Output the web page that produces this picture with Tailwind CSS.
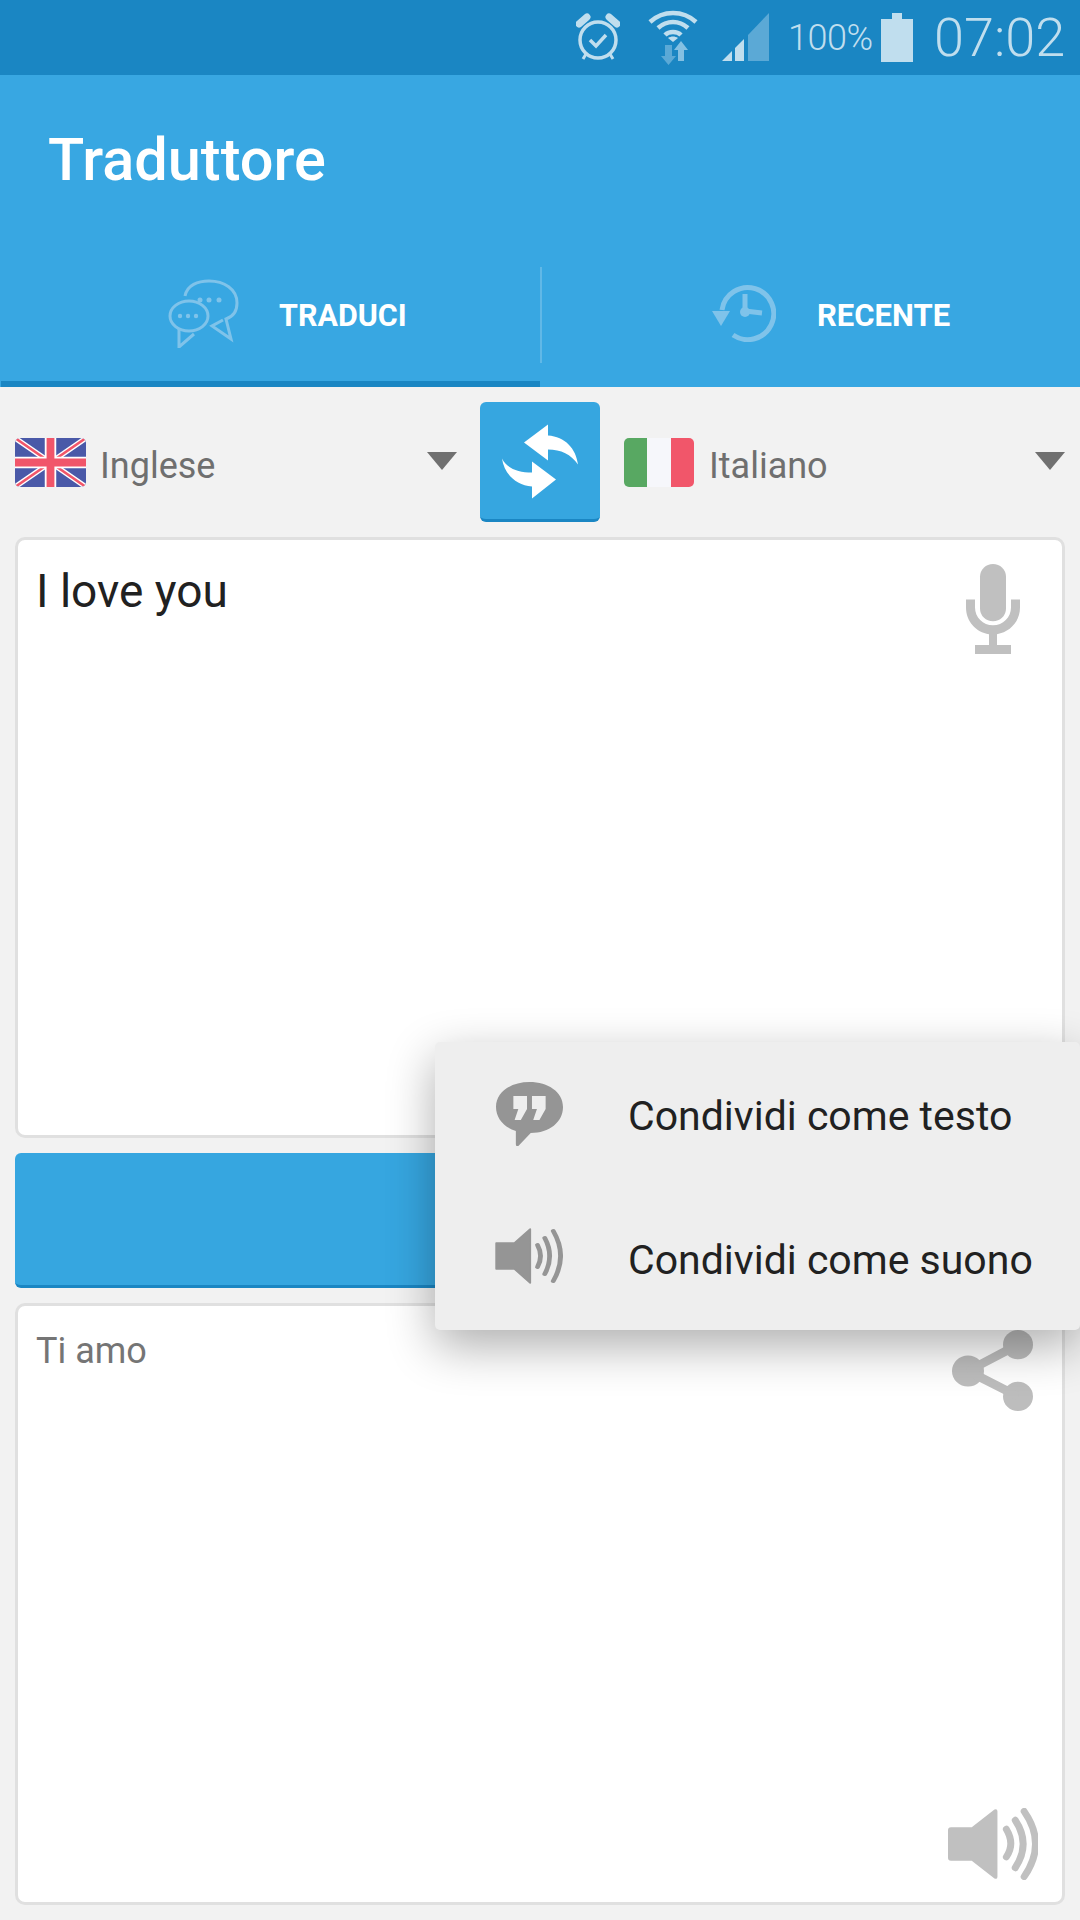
<!DOCTYPE html>
<html lang="it">
<head>
  <meta charset="UTF-8" />
  <meta name="viewport" content="width=device-width,initial-scale=1.0" />
  <title>Traduttore</title>
  <script src="https://cdn.jsdelivr.net/npm/@tailwindcss/browser@4"></script>
</head>

<body class="relative w-[1080px] h-[1920px] overflow-hidden bg-[#f2f2f2] font-['Roboto',sans-serif]">

  <!-- status bar -->
  <div class="h-[75px] bg-[#1a86c3] flex items-center text-[#c0deee]">
    <svg class="ml-[576px] w-[44px] h-[50px]" viewBox="0 0 44 50" fill="none" stroke="#c0deee">
      <circle cx="22" cy="27" r="18" stroke-width="3.5"/>
      <path d="M14 27l6 6 10-11" stroke-width="3.5"/>
      <path d="M3 11l8-7M41 11l-8-7" stroke-width="7" stroke-linecap="round"/>
      <path d="M10 41l-3 5M34 41l3 5" stroke-width="3"/>
    </svg>
    <svg class="ml-[28px] w-[50px] h-[56px]" viewBox="0 0 50 56" fill="none" stroke="#c0deee">
      <path d="M2 12C15 0 35 0 48 12" stroke-width="4.5"/>
      <path d="M10 18C19 10 31 10 40 18" stroke-width="4.5"/>
      <path d="M17 25C21 21 29 21 33 25" stroke-width="4.5"/>
      <path d="M25 32l-5-4c3-2 7-2 10 0z" fill="#c0deee" stroke="none"/>
      <path d="M17 35h7v11h4l-7.5 9-7.5-9h4z" fill="#5ba9d6" stroke="none"/>
      <path d="M33 31l7 9h-4v11h-6v-11h-4z" fill="#84c0e2" stroke="none"/>
    </svg>
    <svg class="ml-[24px] w-[47px] h-[49px]" viewBox="0 0 47 49">
      <path d="M0 48L10 38V48z" fill="#c0deee"/>
      <path d="M13 35L22 26V48H13z" fill="#c0deee"/>
      <path d="M26 22L47 0V48H26z" fill="#5ba9d6"/>
    </svg>
    <span class="ml-[19px] text-[36px] font-light w-[84px] tracking-[-0.5px]">100%</span>
    <svg class="ml-[9px] w-[32px] h-[49px]" viewBox="0 0 32 49">
      <path d="M11 0h10v6h11v43H0V6h11z" fill="#c0deee"/>
    </svg>
    <span class="ml-[21px] text-[54px] font-light leading-none">07:02</span>
  </div>

  <!-- app bar -->
  <div class="h-[191px] bg-[#38a7e2] flex items-center pl-[48px] pb-[20px]">
    <h1 class="text-[59.5px] font-medium text-white">Traduttore</h1>
  </div>

  <!-- tabs -->
  <div class="h-[121px] bg-[#38a7e2] flex">
    <div class="w-[539px] ml-[1px] h-full border-b-[6px] border-[#1a86c3] flex items-start pt-[10px] pl-[167px]">
      <svg class="w-[72px] h-[72px]" viewBox="0 0 72 72" fill="none" stroke="#7fc3ea" stroke-width="3">
        <path d="M17 20C19 9 30 5 41 5C56 5 69 13 69 27C69 36 64 41 58 43L63 63L44 50L55 44"/>
        <ellipse cx="21" cy="40" rx="19" ry="15"/>
        <path d="M11 53V71L26 58"/>
        <g fill="#7fc3ea" stroke="none">
          <circle cx="32" cy="24" r="2.5"/><circle cx="41" cy="24" r="2.5"/><circle cx="51" cy="24" r="2.5"/>
          <circle cx="12" cy="40" r="2.2"/><circle cx="20" cy="40" r="2.2"/><circle cx="28" cy="40" r="2.2"/>
        </g>
      </svg>
      <span class="ml-[39px] mt-[20px] text-[30.5px] font-bold text-white leading-[40px]">TRADUCI</span>
    </div>
    <div class="w-[2px] h-[96px] mt-[1px] bg-[#60b8e7]"></div>
    <div class="flex-1 flex items-start pt-[18px] pl-[170px]">
      <svg class="w-[64px] h-[58px]" viewBox="0 0 64 58" fill="none" stroke="#7fc3ea" stroke-width="5">
        <path d="M10 26A26 26 0 1 1 21 51"/>
        <path d="M0 27H18L9 42z" fill="#7fc3ea" stroke="none"/>
        <path d="M33 10V27L50 29"/>
        <circle cx="33" cy="28" r="5" fill="#7fc3ea" stroke="none"/>
      </svg>
      <span class="ml-[41px] mt-[12px] text-[31px] font-bold text-white leading-[40px]">RECENTE</span>
    </div>
  </div>

  <!-- language row -->
  <div class="h-[150px] flex items-start">
    <div class="w-[480px] h-full flex items-start pl-[15px] pt-[51px]">
      <svg class="w-[71px] h-[49px] rounded-[5px]" viewBox="0 0 68 47" preserveAspectRatio="none">
        <rect width="68" height="47" fill="#4a59a8"/>
        <path d="M0 0L68 47M68 0L0 47" stroke="#fff" stroke-width="5"/>
        <path d="M0 0L68 47M68 0L0 47" stroke="#f1566a" stroke-width="2.5"/>
        <path d="M34 0V47M0 23.5H68" stroke="#fff" stroke-width="11"/>
        <path d="M34 0V47M0 23.5H68" stroke="#f1566a" stroke-width="7.5"/>
      </svg>
      <span class="ml-[14px] mt-[4px] text-[36px] text-[#6f6f6f] leading-[48px] flex-1">Inglese</span>
      <div class="mt-[14px] mr-[23px] w-0 h-0 border-x-[15px] border-x-transparent border-t-[18px] border-t-[#707070]"></div>
    </div>
    <div class="mt-[15px] w-[120px] h-[120px] rounded-[6px] bg-[#36a6e0] border-b-[3px] border-[#1a86c3] flex items-center justify-center">
      <svg class="mt-[2px] w-[90px] h-[90px]" viewBox="20 19.5 90 90" fill="#fff">
        <path d="M49 45L73 27V38C90 39 101 51 103 67C96 57 86 52 73 52V63z"/>
        <path d="M81 82L57 64V75C43 75 32 71 27 61C29 76 41 88 57 89V101z"/>
      </svg>
    </div>
    <div class="flex-1 h-full flex items-start pl-[24px] pt-[51px]">
      <div class="w-[70px] h-[49px] rounded-[5px] overflow-hidden flex">
        <div class="w-[23px] bg-[#58a862]"></div>
        <div class="w-[24px] bg-[#f6f7fb]"></div>
        <div class="w-[23px] bg-[#f1566a]"></div>
      </div>
      <span class="ml-[15px] mt-[4px] text-[36px] text-[#6f6f6f] leading-[48px] flex-1">Italiano</span>
      <div class="mt-[14px] mr-[15px] w-0 h-0 border-x-[15px] border-x-transparent border-t-[18px] border-t-[#707070]"></div>
    </div>
  </div>

  <!-- source card -->
  <div class="relative mx-[15px] h-[601px] bg-white border-[3px] border-[#e0e0e0] rounded-[10px] pl-[18px] pt-[27px]">
    <p class="text-[46px] text-[#212121] leading-[48px]">I love you</p>
    <svg class="absolute right-[42px] top-[24px] w-[54px] h-[90px]" viewBox="0 0 54 91" preserveAspectRatio="none" fill="#c0c0c0">
      <path d="M27 0A13 13 0 0 1 40 13V45A13 13 0 0 1 14 45V13A13 13 0 0 1 27 0z"/>
      <path d="M0 36H9V44C9 54 17 62 27 62S45 54 45 44V36H54V44C54 58 44 69 31 71V82H45V91H9V82H23V71C10 69 0 58 0 44z"/>
    </svg>
  </div>

  <!-- translate button -->
  <div class="mx-[15px] mt-[15px] h-[135px] rounded-[6px] bg-[#36a6e0] border-b-[3px] border-[#1a86c3]"></div>

  <!-- result card -->
  <div class="relative mx-[15px] mt-[15px] h-[602px] bg-white border-[3px] border-[#e0e0e0] rounded-[10px] pl-[18px] pt-[23px]">
    <p class="text-[36px] text-[#757575] leading-[44px]">Ti amo</p>
    <svg class="absolute right-[28px] top-[24px] w-[82px] h-[82px]" viewBox="0 0 82 84" preserveAspectRatio="none" fill="#bdbdbd">
      <circle cx="16" cy="42" r="16"/><circle cx="66" cy="15" r="15"/><circle cx="66" cy="68" r="15"/>
      <path d="M16 42L66 15M16 42L66 68" stroke="#bdbdbd" stroke-width="9"/>
    </svg>
    <svg class="absolute right-[24px] bottom-[22px] w-[90px] h-[72px]" viewBox="0 0 91 72" fill="none" stroke="#c0c0c0" stroke-width="7" stroke-linecap="round">
      <path d="M3 19H24L47 1Q50 0 50 3V69Q50 72 47 71L24 53H3Q0 53 0 50V22Q0 19 3 19z" fill="#c0c0c0" stroke="none"/>
      <path d="M59 21Q68 36 59 49"/>
      <path d="M68 12Q84 36 68 60"/>
      <path d="M77 3Q100 36 77 69"/>
    </svg>
  </div>

  <!-- share menu -->
  <div class="absolute left-[435px] top-[1042px] w-[645px] h-[288px] rounded-[5px] bg-[#eeeeee] shadow-[0_16px_48px_rgba(0,0,0,0.32)]">
    <div class="h-[144px] flex items-start">
      <svg class="ml-[61px] mt-[40px] w-[67px] h-[64px]" viewBox="0 0 54 64" preserveAspectRatio="none" fill="#959595">
        <path d="M27 0C42 0 54 10 54 25C54 40 43 51 28 51L18 64Q16 65 16 62V49C6 45 0 36 0 25C0 10 12 0 27 0z"/>
        <path d="M14 14H25V27L20 38H15L18 27H14zM29 14H40V27L35 38H30L33 27H29z" fill="#eeeeee"/>
      </svg>
      <span class="ml-[65px] mt-[50px] text-[41px] text-[#212121] leading-[48px] whitespace-nowrap">Condividi come testo</span>
    </div>
    <div class="h-[144px] flex items-start">
      <svg class="ml-[60px] mt-[42px] w-[68px] h-[56px]" viewBox="0 0 56 56" preserveAspectRatio="none" fill="none" stroke="#959595" stroke-width="4" stroke-linecap="round">
        <path d="M1 15H16L29 1V55L16 41H1z" fill="#959595" stroke="#959595" stroke-width="1.5" stroke-linejoin="round"/>
        <path d="M35 17Q40 28 35 39"/>
        <path d="M41 10Q49 28 41 46"/>
        <path d="M48 3Q60 28 48 53"/>
      </svg>
      <span class="ml-[65px] mt-[50px] text-[41px] text-[#212121] leading-[48px] whitespace-nowrap">Condividi come suono</span>
    </div>
  </div>

</body>
</html>
